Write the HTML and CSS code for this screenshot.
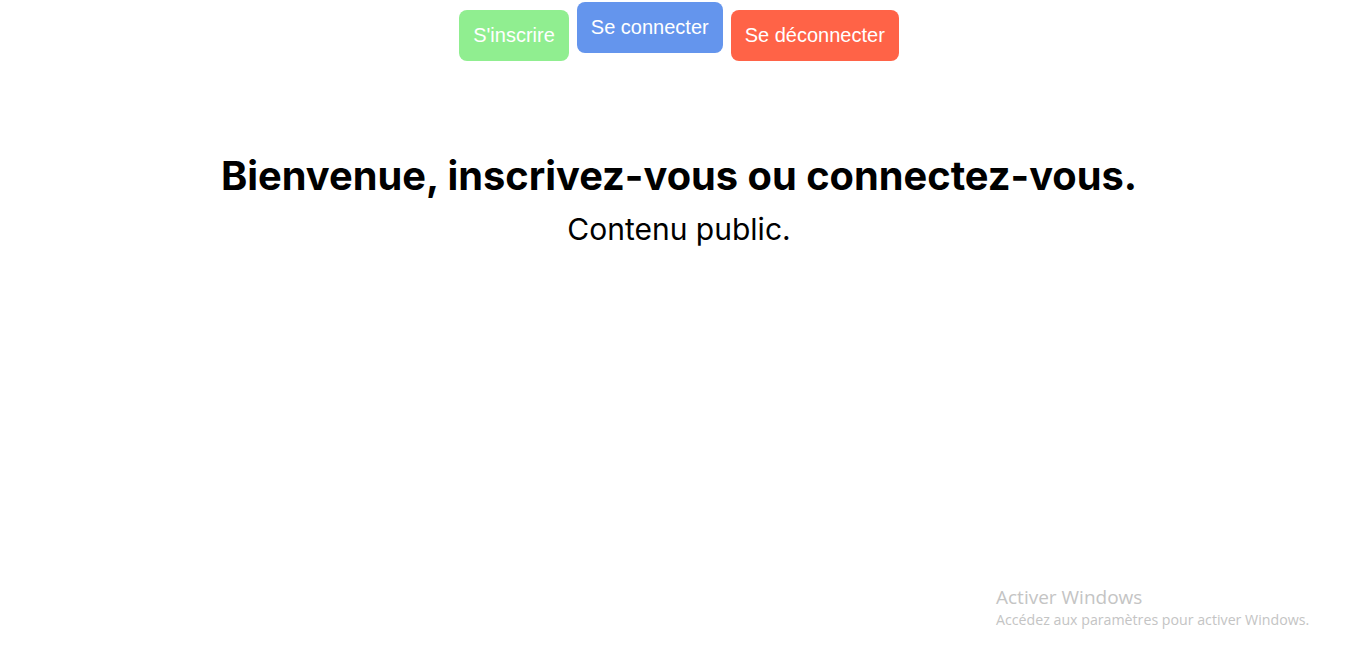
FILE: index.html
```html
<!DOCTYPE html>
<html lang="fr">
<head>
<meta charset="utf-8">
<title>Accueil</title>
<link rel="stylesheet" href="styles.css">
</head>
<body>
<div class="page">
  <nav class="nav">
    <button class="btn btn-signup">S'inscrire</button>
    <button class="btn btn-login">Se connecter</button>
    <button class="btn btn-logout">Se déconnecter</button>
  </nav>
  <main class="content">
    <h1 class="title">Bienvenue, inscrivez-vous ou connectez-vous.</h1>
    <p class="subtitle">Contenu public.</p>
  </main>
  <div class="watermark">
    <div class="wm-title">Activer Windows</div>
    <div class="wm-sub">Accédez aux paramètres pour activer Windows.</div>
  </div>
</div>
</body>
</html>
```
FILE: styles.css
```css
html, body {
  margin: 0;
  padding: 0;
  background: #ffffff;
}
.page {
  position: relative;
  width: 1358px;
  height: 660px;
  overflow: hidden;
  background: #fff;
}
.nav {
  display: flex;
  justify-content: center;
  align-items: flex-start;
  gap: 8px;
  padding-top: 10px;
}
.btn {
  font-family: "Liberation Sans", Arial, sans-serif;
  font-size: 20px;
  color: #ffffff;
  border: none;
  border-radius: 8px;
  padding: 14px 14px;
  line-height: 23px;
}
.btn-signup { background: #90ee90; }
.btn-login { background: #6495ed; transform: translateY(-8px); }
.btn-logout { background: #ff6347; }
.content {
  text-align: center;
  font-family: Inter, sans-serif;
  color: #000;
  padding-top: 91px;
}
.title {
  font-size: 39.8px;
  font-weight: 700;
  margin: 0;
  line-height: 48px;
}
.subtitle {
  font-size: 30px;
  margin: 11px 0 0;
  line-height: 36px;
}
.watermark {
  position: absolute;
  left: 996px;
  top: 585px;
  font-family: "Open Sans", "Noto Sans", sans-serif;
  color: #c4c4c4;
}
.wm-title {
  font-size: 19px;
  line-height: 24px;
}
.wm-sub {
  font-size: 14.2px;
  line-height: 21px;
}
```
